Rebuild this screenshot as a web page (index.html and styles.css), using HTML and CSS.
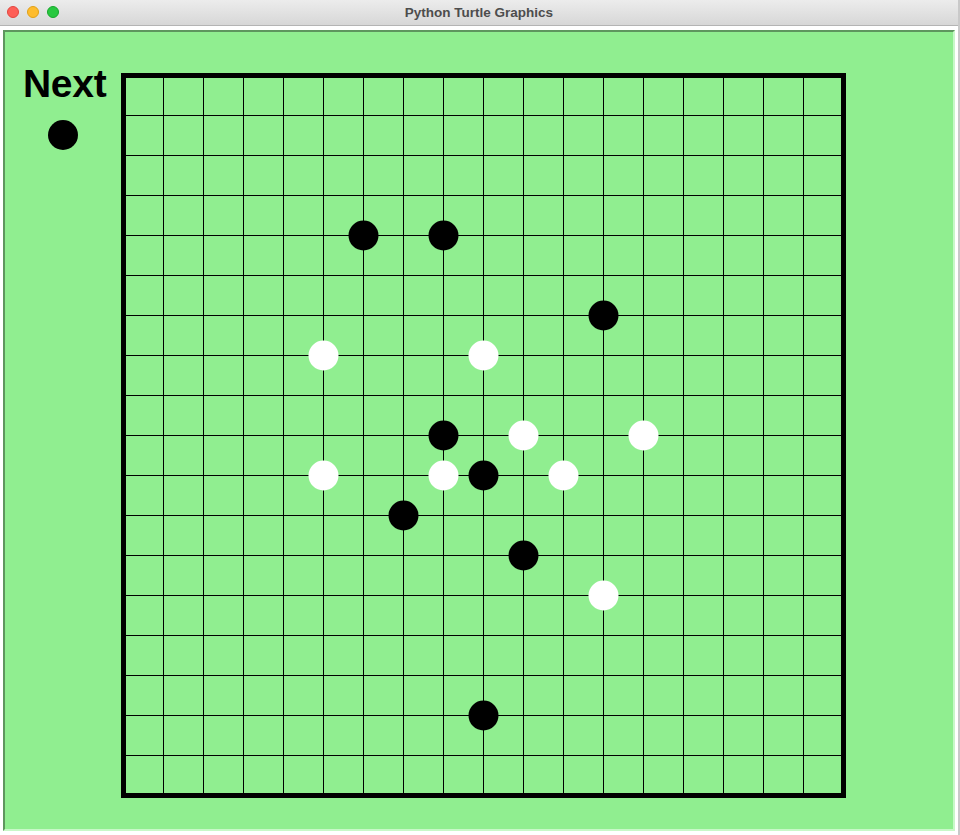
FILE: index.html
```html
<!DOCTYPE html>
<html>
<head>
<meta charset="utf-8">
<title>Python Turtle Graphics</title>
<link rel="stylesheet" href="styles.css">
</head>
<body>
<div class="window">
  <div class="titlebar">
    <div class="lights">
      <span class="light red"></span>
      <span class="light yellow"></span>
      <span class="light green"></span>
    </div>
    <div class="title">Python Turtle Graphics</div>
  </div>
  <div class="content">
    <div class="canvas">
      <svg class="board" width="948" height="797" viewBox="5 32 948 797" xmlns="http://www.w3.org/2000/svg">
        <text class="next" x="23" y="96.5">Next</text>
        <circle cx="63" cy="135" r="15" fill="#000"/>
        <g stroke="#000" stroke-width="1" id="grid"></g>
        <rect x="123.5" y="75.5" width="720" height="720" fill="none" stroke="#000" stroke-width="5"/>
        <g id="stones"></g>
      </svg>
    </div>
  </div>
</div>
<script src="script.js"></script>
</body>
</html>
```

FILE: styles.css
```css
html, body {
  margin: 0;
  padding: 0;
  background: #ffffff;
}
.window {
  width: 960px;
  height: 835px;
  background: #ffffff;
  box-sizing: border-box;
  border-right: 2px solid #c9c9c9;
  overflow: hidden;
}
.titlebar {
  position: relative;
  height: 25px;
  border-bottom: 1px solid #b4b4b4;
  background: linear-gradient(#ececec, #d7d7d7);
  display: flex;
  align-items: center;
  justify-content: center;
}
.lights {
  position: absolute;
  left: 7px;
  top: 6px;
  display: flex;
  gap: 8px;
}
.light {
  width: 12px;
  height: 12px;
  border-radius: 50%;
  box-sizing: border-box;
}
.red { background: #fe5f57; border: 1px solid #e2463f; }
.yellow { background: #febc2e; border: 1px solid #e1a116; }
.green { background: #28c840; border: 1px solid #17a72b; }
.title {
  font-family: "Liberation Sans", Arial, sans-serif;
  font-weight: bold;
  font-size: 13.5px;
  color: #4d4d4d;
}
.content {
  padding: 4px 0 0 3px;
}
.canvas {
  width: 948px;
  height: 797px;
  background: #90ee90;
  border-style: solid;
  border-width: 2px;
  border-color: #5e965e #c8f8c8 #c8f8c8 #5e965e;
}
.board {
  display: block;
}
.next {
  font-family: "Liberation Sans", Arial, sans-serif;
  font-weight: bold;
  font-size: 39px;
  letter-spacing: -0.3px;
  fill: #000;
}
```

FILE: script.js
```js
(function () {
  var ns = "http://www.w3.org/2000/svg";
  var grid = document.getElementById("grid");
  for (var k = 1; k < 18; k++) {
    var x = 123.5 + 40 * k;
    var v = document.createElementNS(ns, "line");
    v.setAttribute("x1", x); v.setAttribute("x2", x);
    v.setAttribute("y1", 75.5); v.setAttribute("y2", 795.5);
    grid.appendChild(v);
    var y = 75.5 + 40 * k;
    var h = document.createElementNS(ns, "line");
    h.setAttribute("y1", y); h.setAttribute("y2", y);
    h.setAttribute("x1", 123.5); h.setAttribute("x2", 843.5);
    grid.appendChild(h);
  }
  var black = [[6,4],[8,4],[12,6],[8,9],[9,10],[7,11],[10,12],[9,16]];
  var white = [[5,7],[9,7],[10,9],[13,9],[5,10],[8,10],[11,10],[12,13]];
  var stones = document.getElementById("stones");
  function put(list, color) {
    list.forEach(function (p) {
      var c = document.createElementNS(ns, "circle");
      c.setAttribute("cx", 123.5 + 40 * p[0]);
      c.setAttribute("cy", 75.5 + 40 * p[1]);
      c.setAttribute("r", 15);
      c.setAttribute("fill", color);
      stones.appendChild(c);
    });
  }
  put(black, "#000");
  put(white, "#fff");
})();
```
